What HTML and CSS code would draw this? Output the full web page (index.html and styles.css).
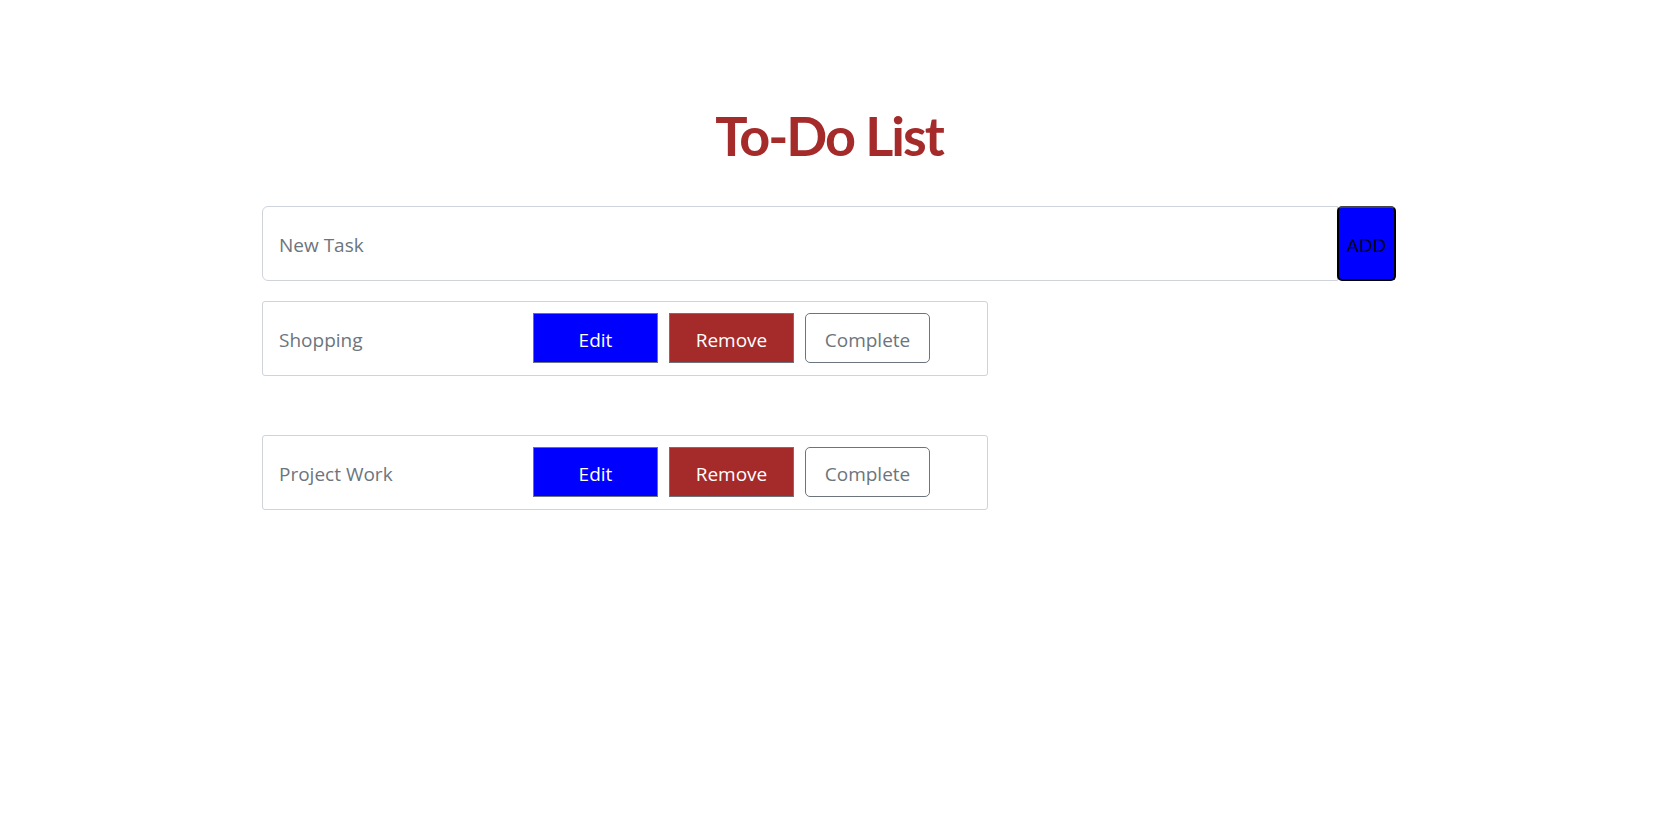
FILE: index.html
```html
<!DOCTYPE html>
<html lang="en">
<head>
<meta charset="utf-8">
<title>To-Do List</title>
<link rel="stylesheet" href="styles.css">
</head>
<body>
<main class="container">
  <h1 class="title">To-Do List</h1>
  <form class="add-form">
    <input class="task-input" type="text" placeholder="New Task">
    <button class="add-btn" type="button">ADD</button>
  </form>
  <ul class="task-list">
    <li class="task">
      <span class="task-name">Shopping</span>
      <button class="btn btn-edit" type="button">Edit</button>
      <button class="btn btn-remove" type="button">Remove</button>
      <button class="btn btn-complete" type="button">Complete</button>
    </li>
    <li class="task">
      <span class="task-name">Project Work</span>
      <button class="btn btn-edit" type="button">Edit</button>
      <button class="btn btn-remove" type="button">Remove</button>
      <button class="btn btn-complete" type="button">Complete</button>
    </li>
  </ul>
</main>
</body>
</html>
```
FILE: styles.css
```css
* { box-sizing: border-box; }
html, body { margin: 0; padding: 0; background: #fff; }
body {
  font-family: "Open Sans", "Noto Sans", "Liberation Sans", sans-serif;
  color: #212529;
}
.container {
  width: 1137px;
  margin: 0 auto;
  padding-top: 104px;
}
.title {
  margin: 0 3px 37px 0;
  text-align: center;
  color: #a52a2a;
  font-family: "Lato", "Open Sans", sans-serif;
  font-size: 54px;
  font-weight: 700;
  letter-spacing: -2px;
  line-height: 1.2;
}
.add-form {
  display: flex;
  margin: 0 3px 20px 0;
}
.task-input {
  flex: 1;
  height: 75px;
  padding: 4px 16px 0;
  border: 1px solid #ced4da;
  border-radius: 6px 0 0 6px;
  font-family: inherit;
  font-size: 19px;
  color: #212529;
  outline: none;
}
.task-input::placeholder { color: #6c757d; }
.add-btn {
  width: 59px;
  height: 75px;
  margin-left: -1px;
  padding: 4px 0 0;
  background: #0000ff;
  border: 2px solid #000;
  border-top-color: #444;
  border-radius: 5px;
  font-family: inherit;
  font-size: 19px;
  color: #000;
}
.task-list {
  list-style: none;
  margin: 0;
  padding: 0;
}
.task {
  display: flex;
  align-items: center;
  width: 726px;
  height: 75px;
  padding: 0 16px;
  border: 1px solid #ced4da;
  border-radius: 3px;
  margin-bottom: 59px;
}
.task-name {
  flex: 0 0 254px;
  padding-top: 3px;
  font-size: 19px;
  color: #6c757d;
}
.btn {
  width: 125px;
  height: 50px;
  margin-right: 11px;
  padding: 3px 0 0;
  border: 1px solid #6c757d;
  font-family: inherit;
  font-size: 19px;
}
.btn-edit { background: #0000ff; color: #fff; border-radius: 0; }
.btn-remove { background: #a52a2a; color: #fff; border-radius: 0; }
.btn-complete { background: #fff; color: #6c757d; border-radius: 5px; margin-right: 0; }
```
